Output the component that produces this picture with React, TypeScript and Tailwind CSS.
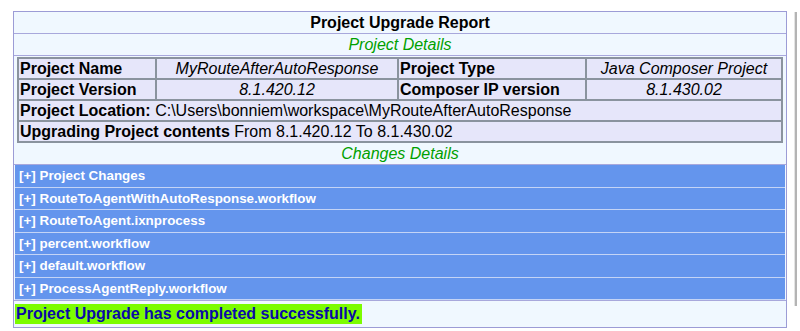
const changes = [
  "Project Changes",
  "RouteToAgentWithAutoResponse.workflow",
  "RouteToAgent.ixnprocess",
  "percent.workflow",
  "default.workflow",
  "ProcessAgentReply.workflow",
];

export default function App() {
  return (
    <div className="flex h-[331px] w-[800px] bg-white pl-[13px] pt-[11px] font-['Liberation_Sans',Arial,sans-serif] text-black">
      <div className="flex w-[774px] flex-col self-start border border-[#9c9cd6] bg-[#f0f8ff]">
        <div className="h-[22px] border-b border-[#a8a8dc] text-center text-[16px] font-bold leading-[21px]">
          Project Upgrade Report
        </div>
        <div className="h-[22px] border-b border-[#a8a8dc] text-center text-[16px] italic leading-[21px] text-[#00a000]">
          Project Details
        </div>

        <div className="px-[3px] pt-px">
          <div className="grid grid-cols-[136px_240px_186px_1fr] gap-[2px] bg-[#8a939e] p-[2px] text-[16px] leading-[19px]">
            <div className="bg-[#e6e6fa] pl-[1px] font-bold">Project Name</div>
            <div className="bg-[#e6e6fa] text-center italic">MyRouteAfterAutoResponse</div>
            <div className="bg-[#e6e6fa] pl-[1px] font-bold">Project Type</div>
            <div className="bg-[#e6e6fa] text-center italic">Java Composer Project</div>

            <div className="bg-[#e6e6fa] pl-[1px] font-bold">Project Version</div>
            <div className="bg-[#e6e6fa] text-center italic">8.1.420.12</div>
            <div className="bg-[#e6e6fa] pl-[1px] font-bold">Composer IP version</div>
            <div className="bg-[#e6e6fa] text-center italic">8.1.430.02</div>

            <div className="col-span-4 bg-[#e6e6fa] pl-[1px]">
              <span className="font-bold">Project Location:</span> C:\Users\bonniem\workspace\MyRouteAfterAutoResponse
            </div>
            <div className="col-span-4 bg-[#e6e6fa] pl-[1px]">
              <span className="font-bold">Upgrading Project contents</span> From 8.1.420.12 To 8.1.430.02
            </div>
          </div>
        </div>

        <div className="h-[22px] border-b border-[#a8a8dc] text-center text-[16px] italic leading-[22px] text-[#00a000]">
          Changes Details
        </div>

        <div className="flex flex-col px-px">
          {changes.map((name) => (
            <div
              key={name}
              className="h-[22.5px] border-b border-[#c4d4f6] bg-[#6495ed] pl-[4px] text-[13.4px] font-bold leading-[21px] text-white"
            >
              [+] {name}
            </div>
          ))}
        </div>

        <div className="border-t border-[#a8a8dc] px-px py-px">
          <span className="inline-block bg-[#7cfc00] pl-px pr-[2px] text-[16px] font-bold leading-[20px] text-[#0a0aa8]">
            Project Upgrade has completed successfully.
          </span>
        </div>
      </div>

      <div className="ml-[7px] mt-px flex h-[294px] w-[3px]">
        <div className="w-px bg-[#e4e4e4]" />
        <div className="w-[2px] bg-[#b4b4b4]" />
      </div>
    </div>
  );
}
